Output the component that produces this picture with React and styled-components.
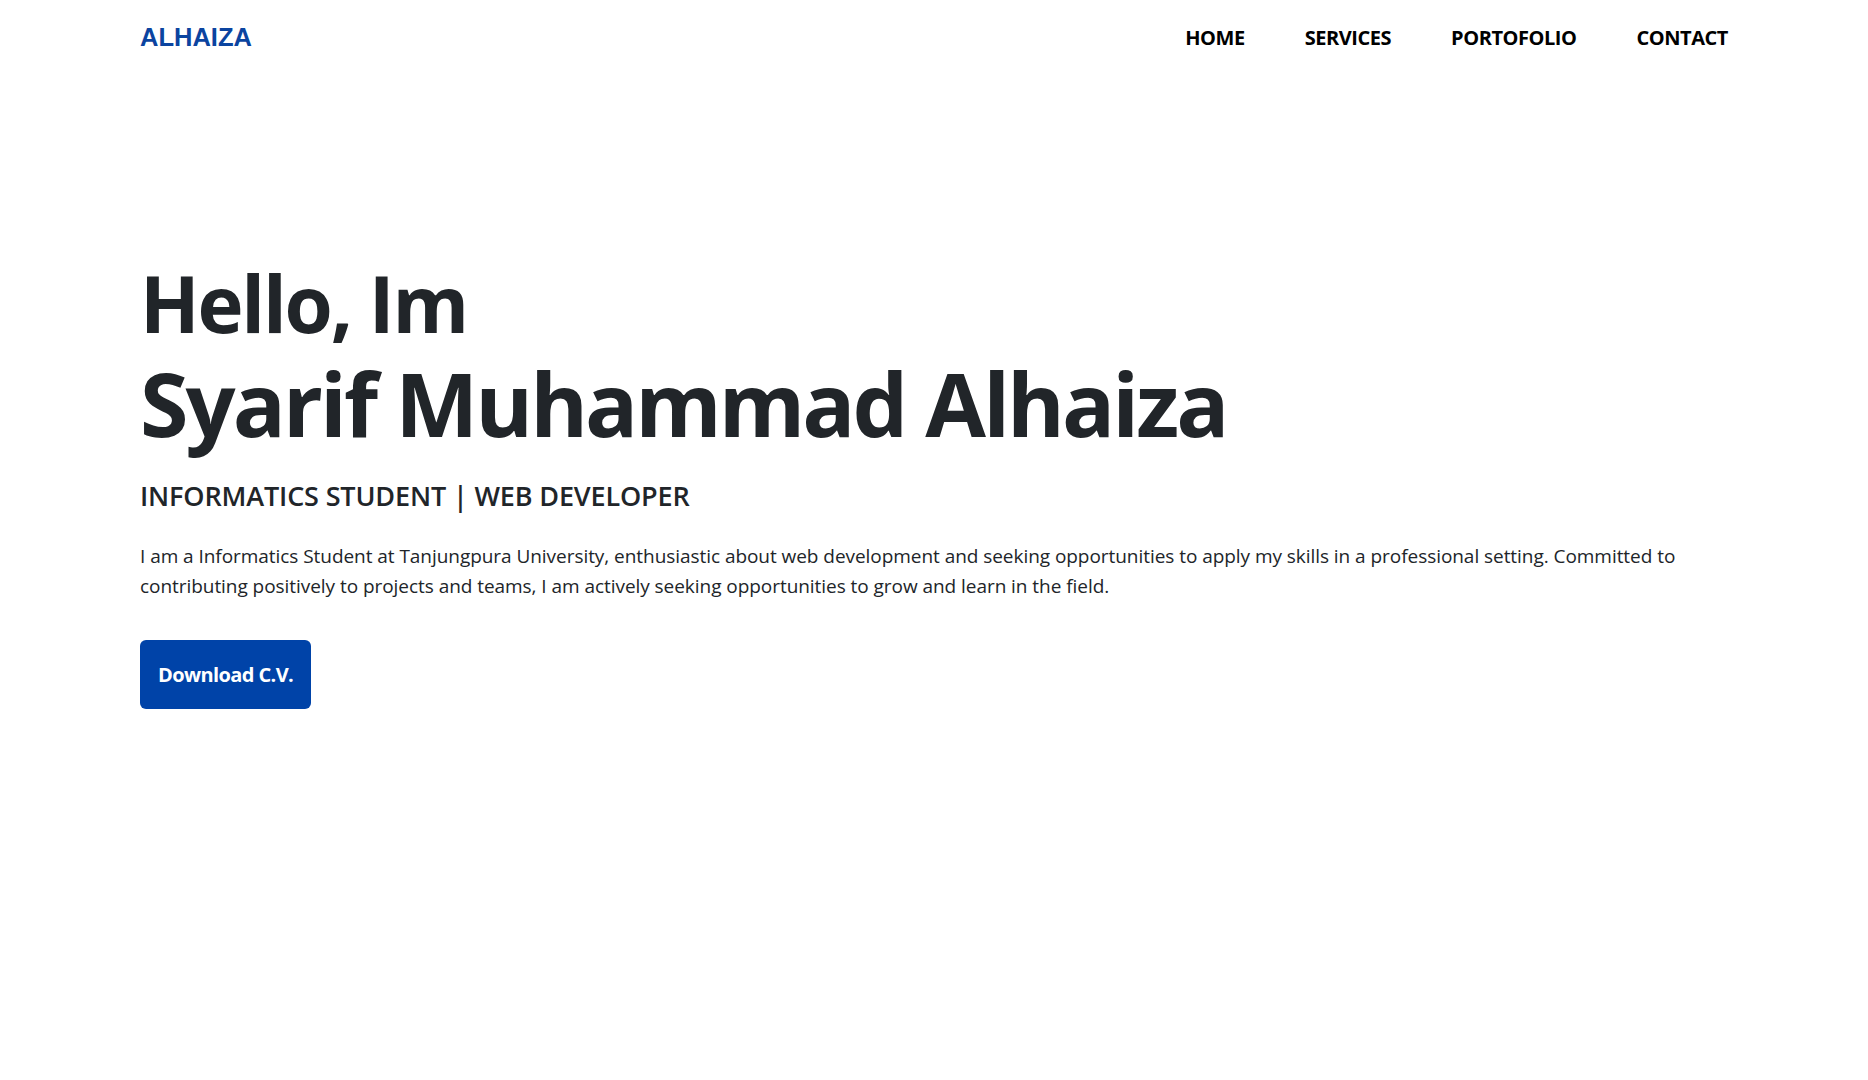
import React from 'react'
import styled, { createGlobalStyle } from 'styled-components'

const GlobalStyle = createGlobalStyle`
    * {
        box-sizing: border-box;
    }
    body {
        margin: 0;
        background: #ffffff;
        font-family: "Open Sans", "Noto Sans", sans-serif;
        color: #212529;
    }
`

const Page = styled.div`
    min-height: 100vh;
    padding: 0 140px;
`

const Navbar = styled.nav`
    height: 74px;
    display: flex;
    align-items: center;
    justify-content: space-between;
`

const Logo = styled.a`
    font-family: "Liberation Sans", Arial, sans-serif;
    font-weight: 700;
    font-size: 25.5px;
    color: #0b44a0;
    text-decoration: none;
`

const NavLinks = styled.ul`
    display: flex;
    gap: 60px;
    list-style: none;
    margin: 0;
    padding: 0;
`

const NavLink = styled.li`
    font-size: 20px;
    font-weight: 700;
    letter-spacing: -0.45px;
    color: #000;
    cursor: pointer;
`

const Hero = styled.section`
    padding-top: 181px;
`

const Greeting = styled.h1`
    margin: 0;
    font-size: 78px;
    font-weight: 700;
    line-height: 96px;
    letter-spacing: -2.2px;
`

const Name = styled.h1`
    margin: 0;
    font-size: 88px;
    font-weight: 700;
    line-height: 1.2;
    letter-spacing: -2.9px;
`

const Role = styled.h3`
    margin: 20px 0 0;
    font-size: 27px;
    font-weight: 600;
    letter-spacing: -0.15px;
`

const About = styled.p`
    margin: 27px 0 0;
    font-size: 19px;
    line-height: 30px;
    letter-spacing: -0.05px;
`

const Button = styled.button`
    margin-top: 39px;
    height: 69px;
    padding: 0 18px;
    border: none;
    border-radius: 6px;
    background: #0043a8;
    color: #fff;
    font-family: inherit;
    font-size: 20px;
    font-weight: 700;
    letter-spacing: -0.6px;
    cursor: pointer;
`

const App = () => {
    return (
        <Page>
            <GlobalStyle />
            <Navbar>
                <Logo>ALHAIZA</Logo>
                <NavLinks>
                    <NavLink>HOME</NavLink>
                    <NavLink>SERVICES</NavLink>
                    <NavLink>PORTOFOLIO</NavLink>
                    <NavLink>CONTACT</NavLink>
                </NavLinks>
            </Navbar>
            <Hero>
                <Greeting>Hello, Im</Greeting>
                <Name>Syarif Muhammad Alhaiza</Name>
                <Role>INFORMATICS STUDENT | WEB DEVELOPER</Role>
                <About>
                    I am a Informatics Student at Tanjungpura University, enthusiastic about web development and seeking opportunities to apply my skills in a professional setting. Committed to contributing positively to projects and teams, I am actively seeking opportunities to grow and learn in the field.
                </About>
                <Button>Download C.V.</Button>
            </Hero>
        </Page>
    )
}

export default App
